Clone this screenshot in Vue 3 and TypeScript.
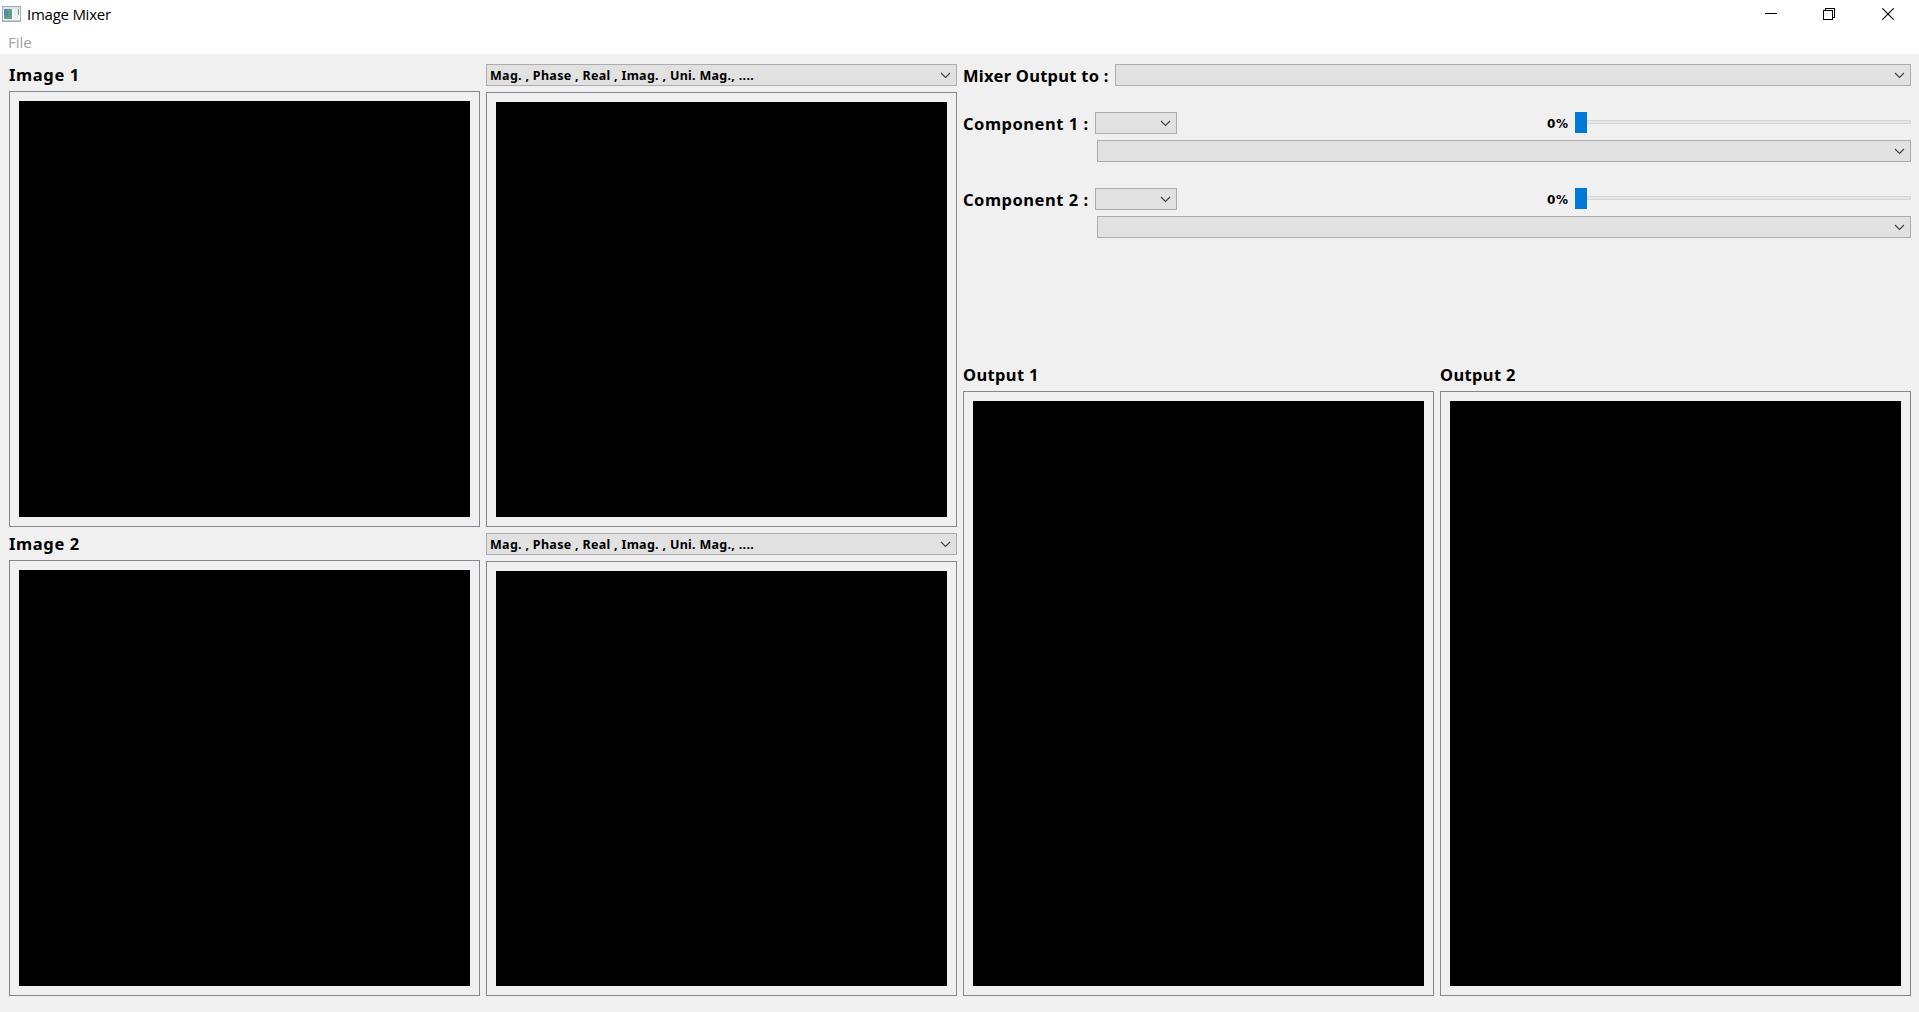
<script setup lang="ts">
interface Source {
  title: string
  view: string
}
interface Component {
  label: string
  ratio: number
}

const sources: Source[] = [
  { title: 'Image 1', view: 'Mag. , Phase , Real , Imag. , Uni. Mag., ....' },
  { title: 'Image 2', view: 'Mag. , Phase , Real , Imag. , Uni. Mag., ....' },
]
const components: Component[] = [
  { label: 'Component 1 :', ratio: 0 },
  { label: 'Component 2 :', ratio: 0 },
]
const outputs: string[] = ['Output 1', 'Output 2']
</script>

<template>
  <div class="window">
    <header class="titlebar">
      <svg class="app-icon" width="19" height="16" viewBox="0 0 19 16">
        <rect x="0.5" y="0.5" width="18" height="15" fill="#f3f5f6" stroke="#a3abb3" />
        <rect x="1" y="1" width="17" height="2" fill="#dfe3e7" />
        <rect x="2" y="3" width="8" height="10" fill="#5d9f87" />
        <rect x="2" y="3" width="4" height="7" fill="#4f8fa0" />
        <rect x="12" y="3" width="4" height="10" fill="#e9ecef" />
        <rect x="16" y="3" width="1" height="6" fill="#55a58b" />
        <rect x="1" y="14" width="17" height="1" fill="#c5cbd1" />
      </svg>
      <span class="title">Image Mixer</span>
      <div class="controls">
        <svg class="minimize" width="12" height="12" shape-rendering="crispEdges"><rect y="5" width="12" height="1" /></svg>
        <svg width="12" height="12" shape-rendering="crispEdges" fill="none" stroke="#000">
          <path d="M.5 2.5h9v9h-9zM2.5 2V.5h9v9H10" />
        </svg>
        <svg width="12" height="12" fill="none" stroke="#000" stroke-width="1.1">
          <path d="M.3 .3L11.7 11.7M11.7 .3L.3 11.7" />
        </svg>
      </div>
    </header>
    <nav class="menubar"><span>File</span></nav>

    <main class="content">
      <div class="sources">
        <section v-for="s in sources" :key="s.title" class="source">
          <div class="column">
            <h2 class="heading image-heading">{{ s.title }}</h2>
            <div class="frame"><div class="canvas"></div></div>
          </div>
          <div class="column">
            <div class="combo">
              <span class="combo-text">{{ s.view }}</span>
              <svg class="chevron" width="11" height="7"><path d="M1 1l4.5 4.5L10 1" /></svg>
            </div>
            <div class="frame"><div class="canvas"></div></div>
          </div>
        </section>
      </div>

      <div class="mixer">
        <div class="target">
          <span class="label target-label">Mixer Output to :</span>
          <div class="combo grow">
            <svg class="chevron" width="11" height="7"><path d="M1 1l4.5 4.5L10 1" /></svg>
          </div>
        </div>
        <div v-for="c in components" :key="c.label" class="component">
          <div class="component-row">
            <span class="label component-label">{{ c.label }}</span>
            <div class="combo small">
              <svg class="chevron" width="11" height="7"><path d="M1 1l4.5 4.5L10 1" /></svg>
            </div>
            <span class="percent">{{ c.ratio }}%</span>
            <div class="slider">
              <div class="handle"></div>
              <div class="groove"></div>
            </div>
          </div>
          <div class="combo kind">
            <svg class="chevron" width="11" height="7"><path d="M1 1l4.5 4.5L10 1" /></svg>
          </div>
        </div>
        <div class="outputs">
          <div v-for="o in outputs" :key="o" class="column">
            <h2 class="heading">{{ o }}</h2>
            <div class="frame"><div class="canvas"></div></div>
          </div>
        </div>
      </div>
    </main>
  </div>
</template>

<style>
body {
  margin: 0;
  background: #f0f0f0;
}
</style>

<style scoped>
* {
  box-sizing: border-box;
}
.window {
  display: flex;
  flex-direction: column;
  width: 1919px;
  height: 1012px;
  overflow: hidden;
  background: #f0f0f0;
  color: #000;
  font-family: "Noto Sans", "Open Sans", sans-serif;
}
.titlebar {
  display: flex;
  align-items: center;
  height: 29px;
  padding-left: 2px;
  background: #fff;
}
.app-icon {
  margin-bottom: 2px;
}
.title {
  margin: 0 0 2px 6px;
  font: 15px/26px "Open Sans", "Noto Sans", sans-serif;
  letter-spacing: -0.25px;
}
.controls {
  display: flex;
  gap: 47px;
  margin: 0 25px 1px auto;
}
.controls svg {
  display: block;
}
.controls .minimize {
  margin-right: -1px;
}
.menubar {
  height: 25px;
  padding-left: 8px;
  background: #fff;
  color: #a0a0a0;
  font: 15px/27px "Open Sans", "Noto Sans", sans-serif;
}
.content {
  display: flex;
  flex: 1;
  gap: 6px;
  padding: 10px 8px 16px 9px;
}
.sources {
  display: flex;
  flex: none;
  flex-direction: column;
  gap: 6px;
  width: 948px;
}
.source,
.outputs {
  display: flex;
  flex: 1;
  gap: 6px;
}
.column {
  display: flex;
  flex: 1;
  flex-direction: column;
  min-width: 0;
}
.heading {
  height: 27px;
  margin: 0;
  font-size: 16.5px;
  font-weight: 700;
  line-height: 22px;
  letter-spacing: 0.36px;
  white-space: nowrap;
}
.image-heading {
  letter-spacing: 0.65px;
}
.frame {
  display: flex;
  flex: 1;
  padding: 9px;
  border: 1px solid #828790;
}
.canvas {
  flex: 1;
  background: #000;
}
.combo {
  display: flex;
  align-items: center;
  height: 22px;
  padding: 0 5px 0 3px;
  border: 1px solid #adadad;
  background: #e1e1e1;
}
.column > .combo {
  margin-bottom: 6px;
}
.combo-text {
  padding-top: 1px;
  font-size: 12.5px;
  font-weight: 700;
  line-height: 20px;
  letter-spacing: 0.3px;
  white-space: nowrap;
}
.chevron {
  margin-left: auto;
  fill: none;
  stroke: #404040;
  stroke-width: 1.1;
}
.mixer {
  display: flex;
  flex: 1;
  flex-direction: column;
  min-width: 0;
}
.target {
  display: flex;
  margin-bottom: 26px;
}
.label {
  height: 22px;
  font-size: 16.5px;
  font-weight: 700;
  line-height: 24px;
  white-space: nowrap;
}
.target-label {
  width: 152px;
  letter-spacing: 0.27px;
}
.grow {
  flex: 1;
}
.component {
  margin-bottom: 26px;
}
.component-row {
  display: flex;
  margin-bottom: 6px;
}
.component-label {
  width: 132px;
  letter-spacing: 0.52px;
}
.small {
  width: 82px;
}
.percent {
  width: 28px;
  height: 22px;
  margin-left: 370px;
  font: 700 12px/24px "DejaVu Sans", sans-serif;
  letter-spacing: 0.6px;
}
.slider {
  display: flex;
  width: 336px;
  height: 22px;
}
.handle {
  width: 12px;
  height: 21px;
  background: #0078d7;
}
.groove {
  flex: 1;
  height: 4px;
  margin-top: 8px;
  border: 1px solid #d6d6d6;
  border-left: 0;
  background: #e7eaea;
}
.kind {
  margin-left: 134px;
}
.outputs {
  margin-top: 100px;
}
</style>
